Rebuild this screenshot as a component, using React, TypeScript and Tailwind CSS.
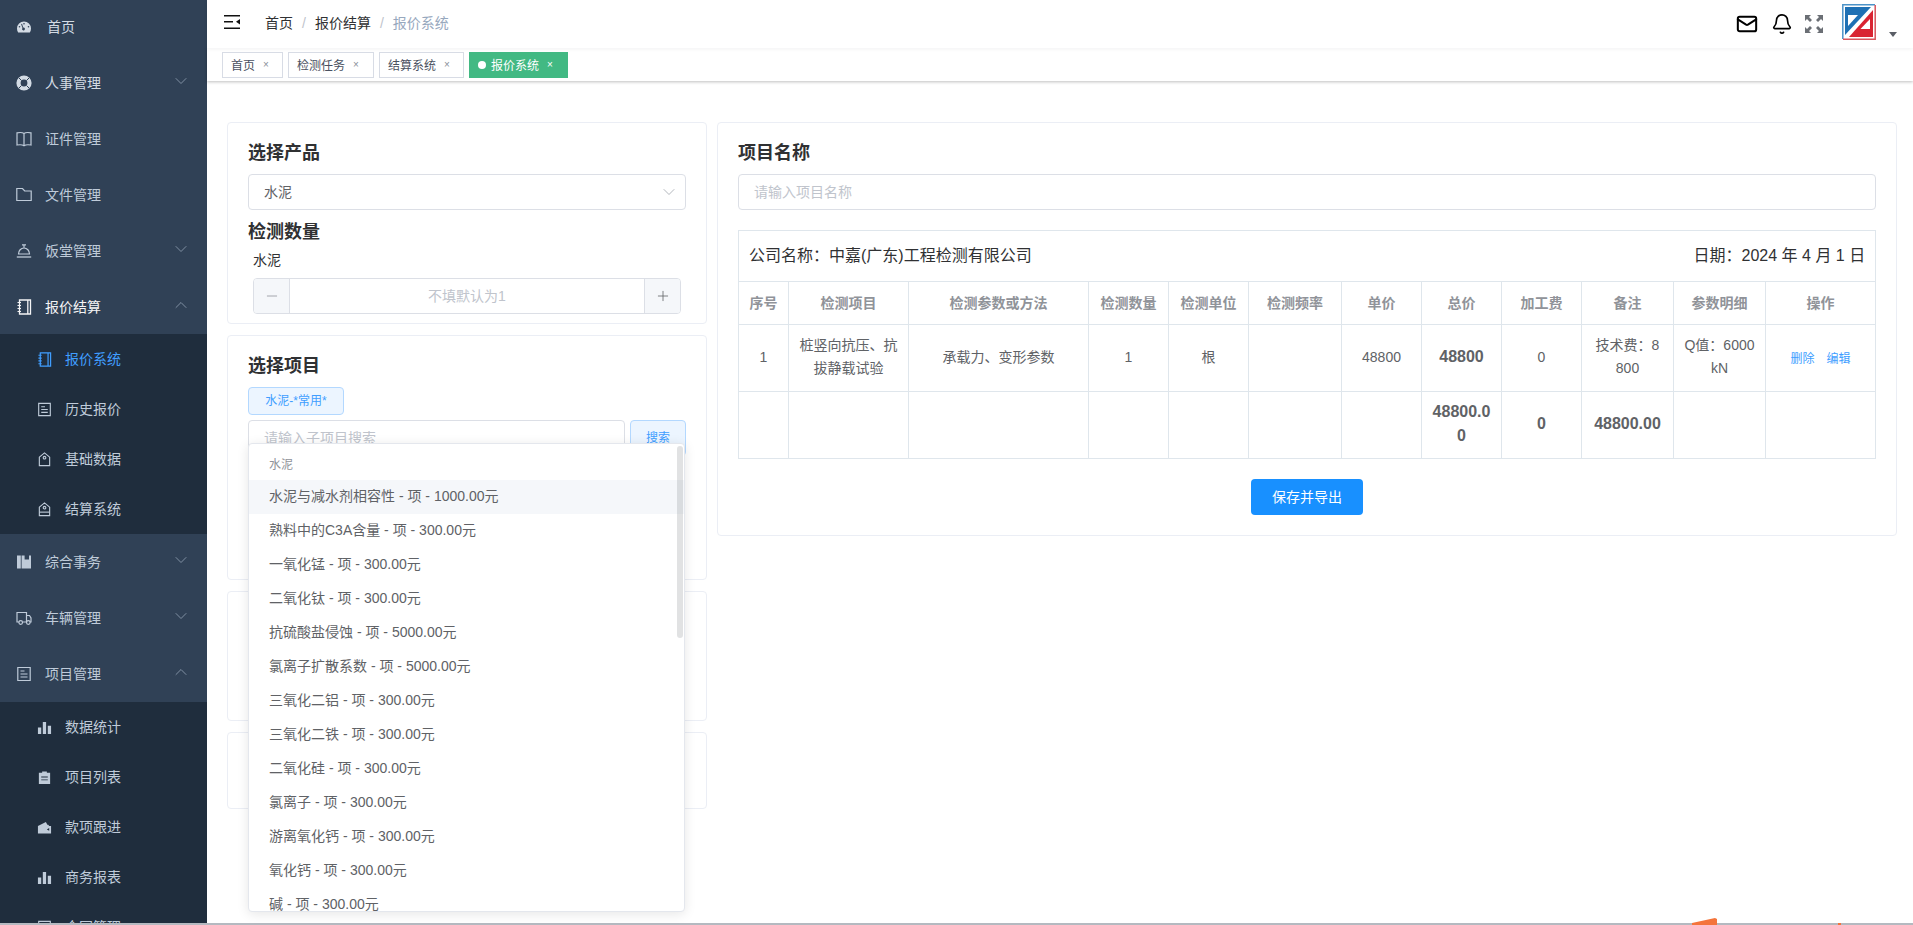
import { Bell, ChevronDown, ChevronUp, Mail, Minus, Plus } from "lucide-react";
import type { ReactNode } from "react";

function Ico({ children, className = "w-4 h-4" }: { children: ReactNode; className?: string }) {
  return (
    <svg viewBox="0 0 16 16" fill="none" stroke="currentColor" strokeWidth="1.2" className={`shrink-0 ${className}`}>
      {children}
    </svg>
  );
}

const icons: Record<string, ReactNode> = {
  dashboard: (
    <path fill="currentColor" stroke="none" fillRule="evenodd" d="M8 2.500a7 7 0 0 1 7 7c0 1.600-.4 2.900-1.200 4H2.200C1.400 12.400 1 11.100 1 9.500a7 7 0 0 1 7-7zM7.200 8.500 6 4.800l-.9.4 1.400 3.700a1.400 1.400 0 1 0 .7-.4zM8 4a.8.8 0 1 0 0 1.600A.8.8 0 0 0 8 4zM3.500 7a.8.8 0 1 0 0 1.600.8.8 0 0 0 0-1.600zm9 0a.8.8 0 1 0 0 1.600.8.8 0 0 0 0-1.600z" />
  ),
  ring: (
    <>
      <circle cx="8" cy="8" r="5.500" stroke="currentColor" strokeWidth="4.200" />
      <path d="M3 3l2.500 2.500M13 3l-2.500 2.500M3 13l2.500-2.500M13 13l-2.500-2.500" stroke="#304156" strokeWidth="1" />
    </>
  ),
  book: <path d="M1 1.800c3-.5 5.500-.5 7 .7 1.500-1.200 4-1.200 7-.7v12.200c-3-.5-5.500-.3-7 .7-1.500-1-4-1.200-7-.7zM8 2.500v12" />,
  folder: <path d="M.8 1.500h5.700l2.200 2.500h6.500v9.500H.8z" />,
  bell: (
    <>
      <path d="M2.500 11a5.500 6 0 0 1 11 0z" />
      <path d="M6 1.800h4M8 1.800v3" />
      <path d="M.8 14h14.400" strokeWidth="1.300" />
    </>
  ),
  notebook: (
    <>
      <path d="M3.500 1h11v14h-11zM11.800 1v14" strokeWidth="1.300" />
      <path d="M1.500 3.500h3.500M1.500 6.500h3.500M1.500 9.500h3.500M1.500 12.500h3.500" />
    </>
  ),
  doc: (
    <>
      <path d="M1.800 1.500h12.400v13H1.800z" />
      <path d="M4.500 5h4M4.500 8h7M4.500 11h7" />
    </>
  ),
  tag: (
    <>
      <path d="M2.500 5.500 8 1l5.500 4.500v9h-11z" />
      <circle cx="8" cy="6" r="1.400" />
    </>
  ),
  tag2: (
    <>
      <path d="M2.500 5.500 8 1l5.500 4.500v9h-11z" />
      <circle cx="8" cy="6" r="1.400" />
      <path d="M2.500 10.800h11" />
    </>
  ),
  shelf: <path fill="currentColor" stroke="none" d="M1 1.500h3.800v13H1zM5.600 1.500h3v4H13v-4h2v13H5.600z" />,
  truck: (
    <>
      <path d="M3 12H1V2.500h9.500V12H6.500M10.500 5.500h3L15 8v4h-1M10.500 12h.5" />
      <circle cx="4.700" cy="12.500" r="1.800" />
      <circle cx="12.300" cy="12.500" r="1.800" />
    </>
  ),
  bars: <path fill="currentColor" stroke="none" d="M1 8h3.500v7H1zM6.200 2h3.500v13H6.200zM11.500 6H15v9h-3.500z" />,
  clip: <path fill="currentColor" stroke="none" fillRule="evenodd" d="M2 3h3.500V1.500h5V3H14v12H2zM4.500 7v1h7V7zm0 3v1h7v-1z" />,
  wallet: <path fill="currentColor" stroke="none" fillRule="evenodd" d="M1 6.500 9.500 2l1.500 3h1l1 1.500H15v8H1zm9.500 3.500L13 8.500v3z" />,
};

type NavItem = {
  label: string;
  icon: string;
  arrow?: "down" | "up";
  tone?: string;
  children?: { label: string; icon: string; active?: boolean }[];
};

const nav: NavItem[] = [
  { label: "首页", icon: "dashboard", tone: "text-[#d3dbe4]" },
  { label: "人事管理", icon: "ring", arrow: "down", tone: "text-[#d3dbe4]" },
  { label: "证件管理", icon: "book" },
  { label: "文件管理", icon: "folder" },
  { label: "饭堂管理", icon: "bell", arrow: "down" },
  {
    label: "报价结算",
    icon: "notebook",
    arrow: "up",
    tone: "text-[#f4f4f5] h-[55px]",
    children: [
      { label: "报价系统", icon: "notebook", active: true },
      { label: "历史报价", icon: "doc" },
      { label: "基础数据", icon: "tag" },
      { label: "结算系统", icon: "tag2" },
    ],
  },
  { label: "综合事务", icon: "shelf", arrow: "down" },
  { label: "车辆管理", icon: "truck", arrow: "down" },
  {
    label: "项目管理",
    icon: "doc",
    arrow: "up",
    children: [
      { label: "数据统计", icon: "bars" },
      { label: "项目列表", icon: "clip" },
      { label: "款项跟进", icon: "wallet" },
      { label: "商务报表", icon: "bars" },
      { label: "合同管理", icon: "doc" },
    ],
  },
];

function Sidebar() {
  return (
    <aside className="w-[207px] shrink-0 bg-[#304156] overflow-hidden text-sm text-[#bfcbd9]">
      <div className="-mt-px">
        {nav.map((item) => (
          <div key={item.label}>
            <div className={`flex items-center pl-4 pr-4 ${item.tone?.includes("h-[55px]") ? "" : "h-14"} ${item.tone ?? ""}`}>
              <Ico>{icons[item.icon]}</Ico>
              <span className={item.icon === "dashboard" ? "ml-[15px]" : "ml-[13px]"}>{item.label}</span>
              {item.arrow === "down" && <ChevronDown size={20} strokeWidth={1.1} className="ml-auto -mt-[4px] text-[#8796a8]" />}
              {item.arrow === "up" && <ChevronUp size={20} strokeWidth={1.1} className="ml-auto -mt-[4px] text-[#8796a8]" />}
            </div>
            {item.children && (
              <div className="bg-[#1f2d3d]">
                {item.children.map((sub) => (
                  <div key={sub.label} className={`h-[50px] flex items-center pl-[37px] ${sub.active ? "text-[#409eff]" : ""}`}>
                    <Ico className="w-[15px] h-[15px]">{icons[sub.icon]}</Ico>
                    <span className="ml-[13px]">{sub.label}</span>
                  </div>
                ))}
              </div>
            )}
          </div>
        ))}
      </div>
    </aside>
  );
}

function TopBar() {
  return (
    <div className="h-12 shrink-0 flex items-center bg-white pl-[17px] pr-4 text-sm shadow-[0_1px_4px_rgba(0,21,41,0.06)] relative z-10">
      <svg viewBox="0 0 16 14" className="w-4 h-[14px] -mt-[4px]" fill="#111">
        <path d="M0 0h16v1.500H0zM0 6h9v1.500H0zM0 12.500h16V14H0z" />
        <path d="M16 4v5.500L12 6.800z" />
      </svg>
      <div className="ml-[25px] -mt-[2px] flex items-center text-[#303133]">
        <span>首页</span>
        <span className="mx-[9px] text-[#c0c4cc]">/</span>
        <span>报价结算</span>
        <span className="mx-[9px] text-[#c0c4cc]">/</span>
        <span className="text-[#97a8be]">报价系统</span>
      </div>
      <div className="ml-auto flex items-center">
        <Mail size={22} strokeWidth={2.2} className="text-black" />
        <Bell size={22} strokeWidth={1.8} className="ml-[13px] text-black" />
        <svg viewBox="0 0 18 18" className="ml-3 w-[18px] h-[18px]" fill="#6b6f75">
          <path d="M0 0h6L4 2l3 3-2 2-3-3-2 2zM18 0v6l-2-2-3 3-2-2 3-3-2-2zM0 18v-6l2 2 3-3 2 2-3 3 2 2zM18 18h-6l2-2-3-3 2-2 3 3 2-2z" />
        </svg>
        <svg viewBox="0 0 34 36" className="ml-[19px] -mt-1 w-[34px] h-9">
          <path d="M.8 35V.8H33" fill="none" stroke="#4c93c8" strokeWidth="1.500" />
          <path d="M33.200 1v34.200H1" fill="none" stroke="#d9545c" strokeWidth="1.500" />
          <path d="M3 3h26L3 31z" fill="#1e70b4" />
          <path d="M6 11h10L6 22z" fill="#fff" />
          <path d="M31 6v27H7z" fill="#d92432" />
          <path d="M28 15v10H18.500z" fill="#fff" />
        </svg>
        <span className="ml-[13px] mt-5 w-0 h-0 border-x-4 border-x-transparent border-t-[5px] border-t-[#5a5e66]" />
      </div>
    </div>
  );
}

const tags = [
  { label: "首页", width: "w-[61px]" },
  { label: "检测任务", width: "w-[86px]" },
  { label: "结算系统", width: "w-[85px]" },
];

function TagsBar() {
  return (
    <div className="h-[33px] shrink-0 bg-white shadow-[0_1px_3px_rgba(0,0,0,0.25)] flex items-start pt-1 pl-[15px] gap-[5px] text-xs relative">
      {tags.map((t) => (
        <div key={t.label} className={`h-[26px] flex items-center border border-[#d8dce5] pl-2 text-[#495060] ${t.width}`}>
          <span className="mt-px">{t.label}</span>
          <span className="ml-[3px] w-4 text-center text-[10px] text-[#8a8f99]">×</span>
        </div>
      ))}
      <div className="h-[26px] w-[99px] flex items-center bg-[#42b983] pl-[9px] text-white">
        <span className="w-2 h-2 rounded-full bg-white mr-[5px]" />
        <span className="mt-px">报价系统</span>
        <span className="ml-[3px] w-4 text-center text-[10px]">×</span>
      </div>
    </div>
  );
}

const options = [
  "水泥与减水剂相容性 - 项 - 1000.00元",
  "熟料中的C3A含量 - 项 - 300.00元",
  "一氧化锰 - 项 - 300.00元",
  "二氧化钛 - 项 - 300.00元",
  "抗硫酸盐侵蚀 - 项 - 5000.00元",
  "氯离子扩散系数 - 项 - 5000.00元",
  "三氧化二铝 - 项 - 300.00元",
  "三氧化二铁 - 项 - 300.00元",
  "二氧化硅 - 项 - 300.00元",
  "氯离子 - 项 - 300.00元",
  "游离氧化钙 - 项 - 300.00元",
  "氧化钙 - 项 - 300.00元",
  "碱 - 项 - 300.00元",
];

const Card = ({ className = "", children }: { className?: string; children?: ReactNode }) => (
  <div className={`bg-white border border-[#ebeef5] rounded px-5 ${className}`}>{children}</div>
);

const H = ({ children, className = "" }: { children: ReactNode; className?: string }) => (
  <h3 className={`h-7 leading-7 text-lg font-bold text-[#303133] ${className}`}>{children}</h3>
);

function LeftColumn() {
  return (
    <div className="w-[480px] shrink-0 flex flex-col gap-[11px]">
      <Card className="h-[202px] pt-4">
        <H>选择产品</H>
        <div className="mt-[7px] h-9 border border-[#dcdfe6] rounded flex items-center justify-between pl-[15px] pr-[6px] text-sm text-[#606266]">
          <span>水泥</span>
          <ChevronDown size={20} strokeWidth={1} className="text-[#a3a8b0]" />
        </div>
        <H className="mt-2">检测数量</H>
        <div className="mt-1 ml-[5px] h-5 leading-5 text-sm text-[#303133]">水泥</div>
        <div className="mt-2 mx-[5px] h-9 w-[428px] border border-[#dcdfe6] rounded flex text-sm overflow-hidden">
          <div className="w-9 bg-[#f5f7fa] border-r border-[#dcdfe6] flex items-center justify-center text-[#909399]">
            <Minus size={16} strokeWidth={1.2} />
          </div>
          <div className="flex-1 flex items-center justify-center text-[#c0c4cc]">不填默认为1</div>
          <div className="w-9 bg-[#f5f7fa] border-l border-[#dcdfe6] flex items-center justify-center text-[#606266]">
            <Plus size={16} strokeWidth={1.2} />
          </div>
        </div>
      </Card>
      <Card className="h-[245px] pt-4">
        <H>选择项目</H>
        <div className="mt-[7px] w-[96px] h-7 flex items-center justify-center rounded bg-[#ecf5ff] border border-[#b3d8ff] text-xs text-[#409eff]">
          水泥-*常用*
        </div>
        <div className="relative mt-[5px] h-9 flex gap-[5px]">
          <div className="w-[377px] border border-[#dcdfe6] rounded flex items-center pl-[15px] text-sm text-[#c0c4cc]">请输入子项目搜索</div>
          <div className="w-[56px] border border-[#b3d8ff] bg-[#ecf5ff] rounded flex items-center justify-center text-xs text-[#409eff]">搜索</div>
          <div className="absolute left-0 top-[23px] w-[437px] h-[469px] z-20 bg-white border border-[#e4e7ed] rounded overflow-hidden shadow-[0_2px_12px_rgba(0,0,0,0.1)]">
            <div className="h-9 pt-[6px] leading-[30px] pl-5 text-xs text-[#909399]">水泥</div>
            {options.map((o, i) => (
              <div key={o} className={`h-[34px] leading-[32px] pl-5 text-sm text-[#606266] whitespace-nowrap ${i === 0 ? "bg-[#f5f7fa]" : ""}`}>
                {o}
              </div>
            ))}
            <div className="absolute left-[428px] top-[2px] w-[6px] h-[192px] rounded-full bg-[#90939945]" />
          </div>
        </div>
      </Card>
      <Card className="h-[130px]" />
      <Card className="h-[77px]" />
    </div>
  );
}

const columns = [50, 120, 180, 80, 80, 93, 80, 80, 80, 92, 92, 110];
const heads = ["序号", "检测项目", "检测参数或方法", "检测数量", "检测单位", "检测频率", "单价", "总价", "加工费", "备注", "参数明细", "操作"];
const th = "border border-[#dfe6ec] px-[10px] text-center align-middle";
const td = "border border-[#dfe6ec] px-[10px] pb-[2px] text-center align-middle break-all";

function RightColumn() {
  return (
    <Card className="flex-1 h-[414px] pt-4 px-4">
      <H>项目名称</H>
      <div className="mt-[7px] h-9 border border-[#dcdfe6] rounded flex items-center pl-[15px] text-sm text-[#c0c4cc]">请输入项目名称</div>
      <table className="mt-5 w-full table-fixed border-collapse text-sm leading-[23px] text-[#606266]">
        <colgroup>
          {columns.map((w, i) => (
            <col key={i} style={{ width: w }} />
          ))}
        </colgroup>
        <tbody>
          <tr className="h-[51px]">
            <td colSpan={12} className="border border-[#dfe6ec] px-[10px] text-base text-[#303133]">
              <div className="flex justify-between">
                <span>公司名称：中嘉(广东)工程检测有限公司</span>
                <span>日期：2024 年 4 月 1 日</span>
              </div>
            </td>
          </tr>
          <tr className="h-[43px] font-bold text-[#909399]">
            {heads.map((h) => (
              <th key={h} className={th}>
                {h}
              </th>
            ))}
          </tr>
          <tr className="h-[67px]">
            <td className={td}>1</td>
            <td className={td}>桩竖向抗压、抗拔静载试验</td>
            <td className={td}>承载力、变形参数</td>
            <td className={td}>1</td>
            <td className={td}>根</td>
            <td className={td} />
            <td className={td}>48800</td>
            <td className={`${td} text-base font-bold`}>48800</td>
            <td className={td}>0</td>
            <td className={td}>技术费：8800</td>
            <td className={td}>Q值：6000 kN</td>
            <td className={td}>
              <div className="flex justify-center gap-3 mt-[3px] text-xs text-[#409eff]">
                <span>删除</span>
                <span>编辑</span>
              </div>
            </td>
          </tr>
          <tr className="h-[67px] text-base font-bold">
            <td className={td} />
            <td className={td} />
            <td className={td} />
            <td className={td} />
            <td className={td} />
            <td className={td} />
            <td className={td} />
            <td className={td}>48800.00</td>
            <td className={td}>0</td>
            <td className={td}>48800.00</td>
            <td className={td} />
            <td className={td} />
          </tr>
        </tbody>
      </table>
      <div className="mt-5 flex justify-center">
        <div className="w-[112px] h-9 rounded bg-[#1890ff] text-white text-sm flex items-center justify-center">保存并导出</div>
      </div>
    </Card>
  );
}

export default function App() {
  return (
    <div className="relative h-[925px] overflow-hidden bg-white [font-family:'Liberation_Sans','Noto_Sans_CJK_SC',sans-serif]">
      <div className="flex h-[923px]">
        <Sidebar />
        <main className="flex-1 min-w-0 flex flex-col">
          <TopBar />
          <TagsBar />
          <div className="flex-1 flex items-start gap-[10px] pt-[41px] pl-5 pr-4">
            <LeftColumn />
            <RightColumn />
          </div>
        </main>
      </div>
      <div className="h-[2px] bg-[#b4b9c0]" />
      <svg className="absolute left-[1690px] top-[917px] w-[30px] h-[8px]" viewBox="0 0 30 8" fill="#f4743b">
        <path d="M2 6 25 1l2 1v6H2z" />
      </svg>
      <div className="absolute left-[1838px] top-[923px] w-[3px] h-[2px] bg-[#f4743b]" />
    </div>
  );
}
